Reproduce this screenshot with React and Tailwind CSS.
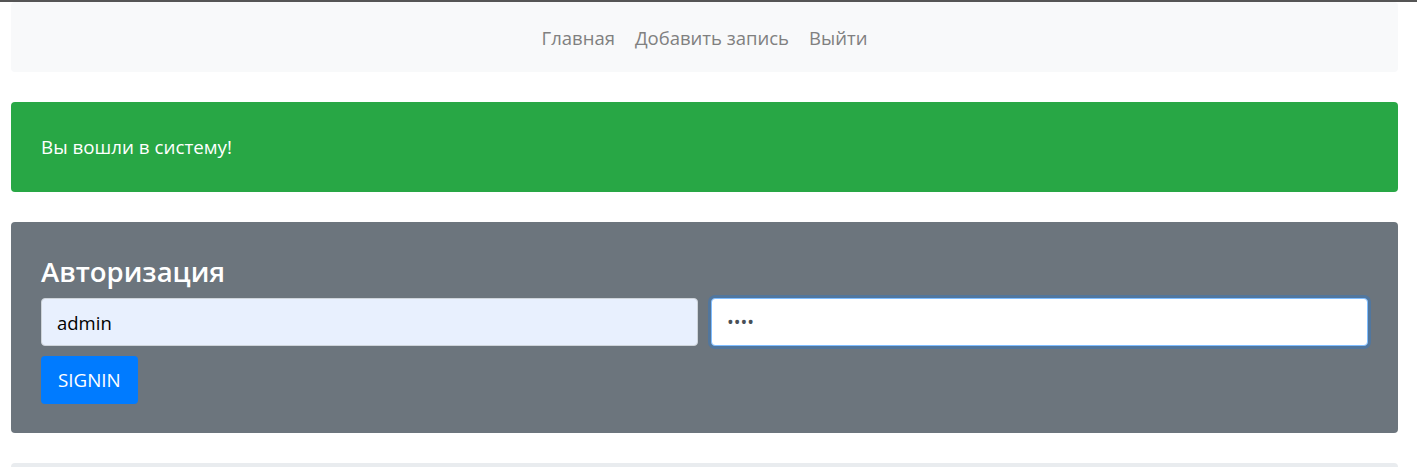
import React, { useState } from 'react';

function App() {
    const [login, setLogin] = useState("admin");
    const [password, setPassword] = useState("1234");
    const links = ["Главная", "Добавить запись", "Выйти"];

    return (
        <div className="min-h-[467px] bg-white text-[18px]" style={{ fontFamily: '"Open Sans", "Noto Sans", sans-serif' }}>
            <div className="h-[2px] bg-[#555]"></div>
            <div className="ml-[11px] w-[1387px]">
                <nav className="flex h-[70px] items-center justify-center gap-[20px] rounded bg-[#f8f9fa] pt-[1px]">
                    {links.map((link) => (
                        <a key={link} href="#" className="text-[18.5px] text-[#808080]">
                            {link}
                        </a>
                    ))}
                </nav>

                <div className="mt-[30px] flex h-[90px] items-center rounded bg-[#28a745] px-[30px] text-[18.8px] text-white">
                    Вы вошли в систему!
                </div>

                <div className="mt-[30px] rounded bg-[#6c757d] px-[30px] pt-[33px] pb-[29px]">
                    <h3 className="mb-[9px] text-[27.5px] leading-[34px] font-semibold text-white">Авторизация</h3>
                    <div className="flex gap-[13px]">
                        <input
                            className="h-[48px] flex-1 rounded border border-[#ced4da] bg-[#e8f0fe] px-[15px] text-[18.5px] text-black outline-none"
                            value={login}
                            onChange={(e) => setLogin(e.target.value)}
                        />
                        <input
                            type="password"
                            autoFocus
                            className="h-[48px] flex-1 rounded border border-[#80bdff] bg-white px-[15px] text-[18px] text-[#495057] caret-black shadow-[0_0_0_3px_rgba(0,123,255,0.25)] outline-none"
                            value={password}
                            onChange={(e) => setPassword(e.target.value)}
                        />
                    </div>
                    <button className="mt-[10px] h-[48px] rounded bg-[#007bff] px-[17px] text-[18.8px] text-white">
                        SIGNIN
                    </button>
                </div>

                <div className="mt-[30px] h-[40px] rounded bg-[#e9ecef]"></div>
            </div>
        </div>
    );
}

export default App;
